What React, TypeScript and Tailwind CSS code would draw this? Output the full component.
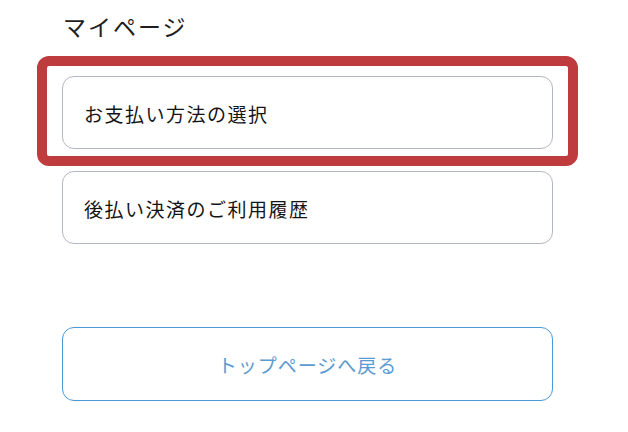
import React from "react";

const font = { fontFamily: '"Noto Sans CJK JP", "Noto Sans", sans-serif' };

export default function App() {
  return (
    <div
      className="w-[628px] h-[432px] bg-white overflow-hidden font-['Noto_Sans_CJK_JP',sans-serif]"
      style={font}
    >
      <div className="pl-[62px] pr-[75px] pt-[10px]">
        <h1 className="pl-[1px] text-[23px] leading-[33px] tracking-[2px] text-[#1e1e1e] font-normal">
          マイページ
        </h1>
        <div className="relative mt-[33px]">
          <button className="w-full h-[73px] flex items-center pl-[21px] pt-[3px] rounded-[12px] border border-[#b3b7c3] bg-white text-[19px] tracking-[1.5px] text-[#141414] font-normal">
            お支払い方法の選択
          </button>
          <div className="absolute left-[-25px] right-[-25px] top-[-20px] bottom-[-17px] border-[10px] border-[#bf3c3e] rounded-[12px] pointer-events-none" />
        </div>
        <button className="mt-[22px] w-full h-[73px] flex items-center pl-[21px] pt-[3px] rounded-[12px] border border-[#b3b7c3] bg-white text-[19px] tracking-[1.5px] text-[#141414] font-normal">
          後払い決済のご利用履歴
        </button>
        <button className="mt-[83px] w-full h-[74px] flex items-center justify-center pt-[3px] rounded-[12px] border border-[#4a98d4] bg-white text-[19px] tracking-[1px] text-[#5a9bd2]">
          トップページへ戻る
        </button>
      </div>
    </div>
  );
}
